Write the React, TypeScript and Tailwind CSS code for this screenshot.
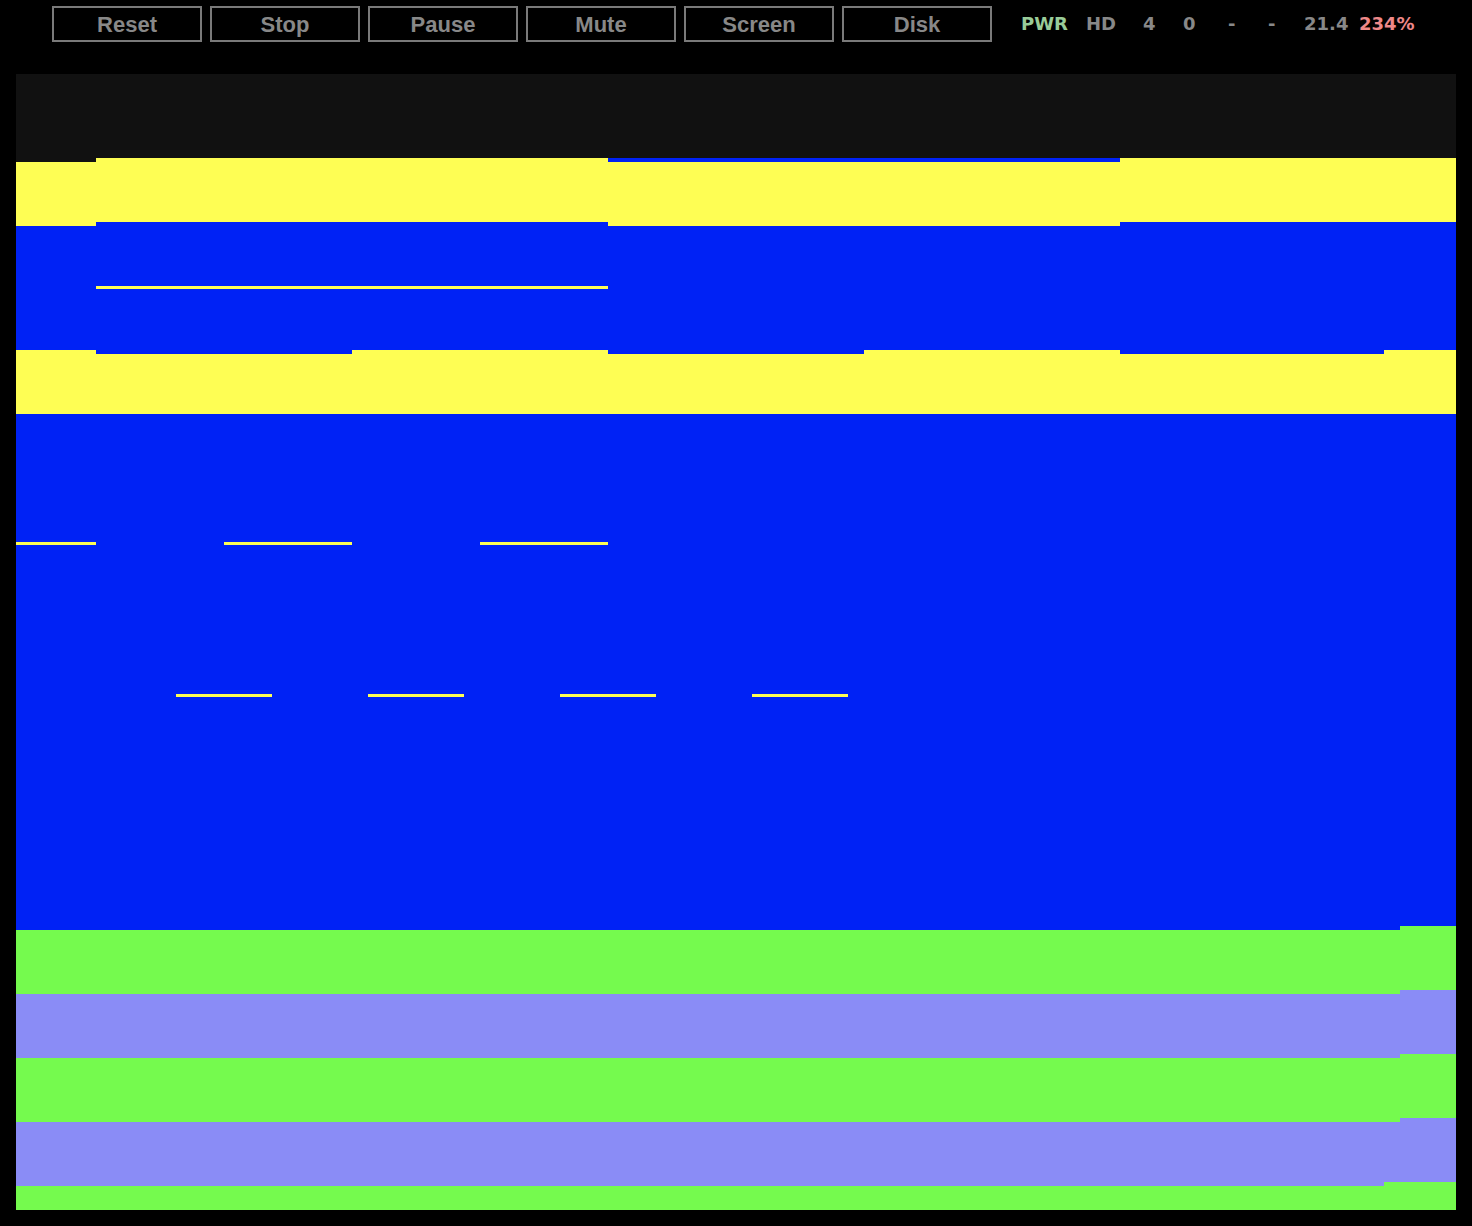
import React from "react";

const buttons = ["Reset", "Stop", "Pause", "Mute", "Screen", "Disk"];

// status readouts: text, colour, box width
const status = [
  { t: "PWR", c: "text-[#99cc99]", w: "w-[65px]" },
  { t: "HD", c: "text-[#888888]", w: "w-[57px]" },
  { t: "4", c: "text-[#888888]", w: "w-[40px]" },
  { t: "0", c: "text-[#888888]", w: "w-[45px]" },
  { t: "-", c: "text-[#888888]", w: "w-[40px]" },
  { t: "-", c: "text-[#888888]", w: "w-[36px]" },
  { t: "21.4", c: "text-[#888888]", w: "w-[55px]" },
  { t: "234%", c: "text-[#ee8888]", w: "w-[70px]" },
];

const Y = "#fefe54";
const B = "#0022f5";
const G = "#75fa4e";
const L = "#8a8cf6";

function Screen() {
  return (
    <svg
      width="1440"
      height="1136"
      viewBox="0 0 1440 1136"
      shapeRendering="crispEdges"
      className="block"
    >
      <rect x="0" y="0" width="1440" height="84" fill="#111111" />
      <rect x="0" y="84" width="1440" height="772" fill={B} />
      <rect x="0" y="84" width="80" height="4" fill="#111111" />

      {/* top yellow band */}
      <rect x="0" y="88" width="80" height="64" fill={Y} />
      <rect x="80" y="84" width="512" height="64" fill={Y} />
      <rect x="592" y="88" width="512" height="64" fill={Y} />
      <rect x="1104" y="84" width="336" height="64" fill={Y} />

      <rect x="80" y="212" width="512" height="3" fill={Y} />

      {/* second yellow band */}
      <rect x="0" y="276" width="80" height="64" fill={Y} />
      <rect x="80" y="280" width="256" height="60" fill={Y} />
      <rect x="336" y="276" width="256" height="64" fill={Y} />
      <rect x="592" y="280" width="256" height="60" fill={Y} />
      <rect x="848" y="276" width="256" height="64" fill={Y} />
      <rect x="1104" y="280" width="264" height="60" fill={Y} />
      <rect x="1368" y="276" width="72" height="64" fill={Y} />

      {/* dashes */}
      <rect x="0" y="468" width="80" height="3" fill={Y} />
      <rect x="208" y="468" width="128" height="3" fill={Y} />
      <rect x="464" y="468" width="128" height="3" fill={Y} />

      <rect x="160" y="620" width="96" height="3" fill={Y} />
      <rect x="352" y="620" width="96" height="3" fill={Y} />
      <rect x="544" y="620" width="96" height="3" fill={Y} />
      <rect x="736" y="620" width="96" height="3" fill={Y} />

      {/* bottom stripes */}
      <rect x="0" y="856" width="1384" height="64" fill={G} />
      <rect x="0" y="920" width="1384" height="64" fill={L} />
      <rect x="0" y="984" width="1384" height="64" fill={G} />
      <rect x="0" y="1048" width="1384" height="64" fill={L} />
      <rect x="0" y="1112" width="1384" height="24" fill={G} />
      <rect x="1368" y="1108" width="16" height="4" fill={G} />

      <rect x="1384" y="852" width="56" height="64" fill={G} />
      <rect x="1384" y="916" width="56" height="64" fill={L} />
      <rect x="1384" y="980" width="56" height="64" fill={G} />
      <rect x="1384" y="1044" width="56" height="64" fill={L} />
      <rect x="1384" y="1108" width="56" height="28" fill={G} />
    </svg>
  );
}

export default function App() {
  return (
    <div className="min-h-screen bg-black pb-4">
      {/* Toolbar */}
      <div className="flex items-center pl-[52px] pt-[6px]">
        <div className="flex gap-2">
          {buttons.map((b) => (
            <button
              key={b}
              className="w-[150px] h-[36px] border-2 border-[#7a7a7a] bg-black text-[#888888] text-[22px] font-bold leading-none pt-[2px] font-['Liberation_Sans',Arial,sans-serif]"
            >
              {b}
            </button>
          ))}
        </div>
        <div className="flex items-center ml-[29px] font-['DejaVu_Sans',Verdana,sans-serif] font-bold text-[18px] leading-none">
          {status.map((s, i) => (
            <span key={i} className={`${s.w} ${s.c} whitespace-nowrap`}>
              {s.t}
            </span>
          ))}
        </div>
      </div>

      {/* Emulator screen */}
      <div className="mx-4 mt-[32px] w-[1440px] h-[1136px]">
        <Screen />
      </div>
    </div>
  );
}
